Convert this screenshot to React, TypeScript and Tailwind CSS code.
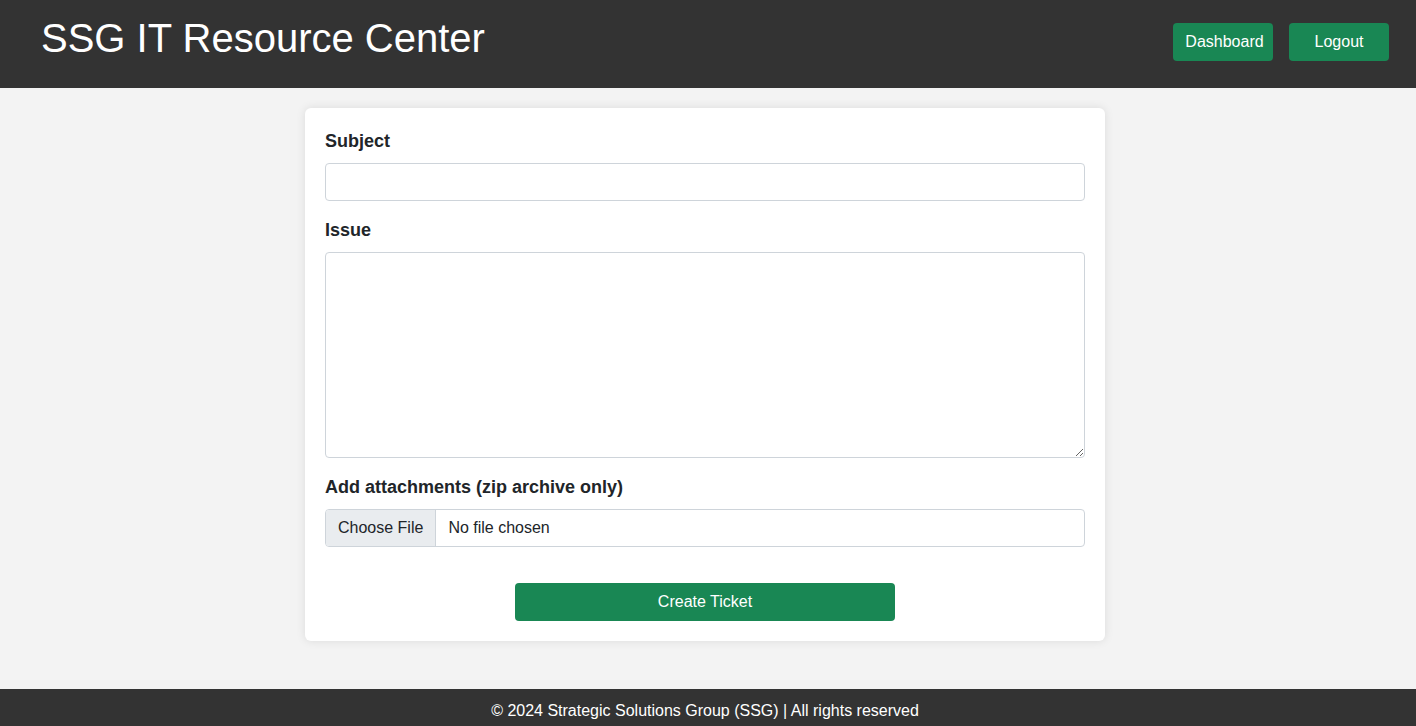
import React from "react";

export default function App() {
  return (
    <div className="min-h-screen bg-[#f3f3f3] font-['Liberation_Sans',Arial,sans-serif] text-[#212529]">
      {/* Header */}
      <header className="flex h-[88px] items-start justify-between bg-[#333333] pl-[41px] pr-[27px] text-white">
        <h1 className="pt-[14px] text-[40px] leading-[48px] font-normal">SSG IT Resource Center</h1>
        <nav className="flex gap-4 pt-[23px]">
          <button className="h-[38px] w-[100px] rounded-[4px] bg-[#198754] pl-[3px] text-base text-white">Dashboard</button>
          <button className="h-[38px] w-[100px] rounded-[4px] bg-[#198754] text-base text-white">Logout</button>
        </nav>
      </header>

      {/* Form */}
      <main className="flex justify-center pt-5 pr-[6px] pb-12">
        <form className="w-[800px] rounded-md bg-white p-5 shadow-[0_0_10px_rgba(0,0,0,0.1)]">
          <label className="mb-2 block text-lg leading-[27px] font-bold">Subject</label>
          <input
            type="text"
            className="mb-4 block h-[38px] w-full rounded-[4px] border border-[#ced4da] px-3 text-base outline-none"
          />

          <label className="mb-2 block text-lg leading-[27px] font-bold">Issue</label>
          <textarea className="mb-4 block h-[206px] w-full rounded-[4px] border border-[#ced4da] px-3 py-1.5 text-base outline-none" />

          <label className="mb-2 block text-lg leading-[27px] font-bold">Add attachments (zip archive only)</label>
          <div className="flex h-[38px] w-full overflow-hidden rounded-[4px] border border-[#ced4da] text-base">
            <span className="flex items-center border-r border-[#ced4da] bg-[#e9ecef] px-3">Choose File</span>
            <span className="flex items-center pl-3">No file chosen</span>
          </div>

          <div className="mt-9 flex justify-center">
            <button
              type="button"
              className="h-[38px] w-[380px] rounded-[4px] bg-[#198754] text-base text-white"
            >
              Create Ticket
            </button>
          </div>
        </form>
      </main>

      {/* Footer */}
      <footer className="bg-[#333333] py-2.5 pr-[6px] text-center text-base leading-6 text-white">
        © 2024 Strategic Solutions Group (SSG) | All rights reserved
      </footer>
    </div>
  );
}
